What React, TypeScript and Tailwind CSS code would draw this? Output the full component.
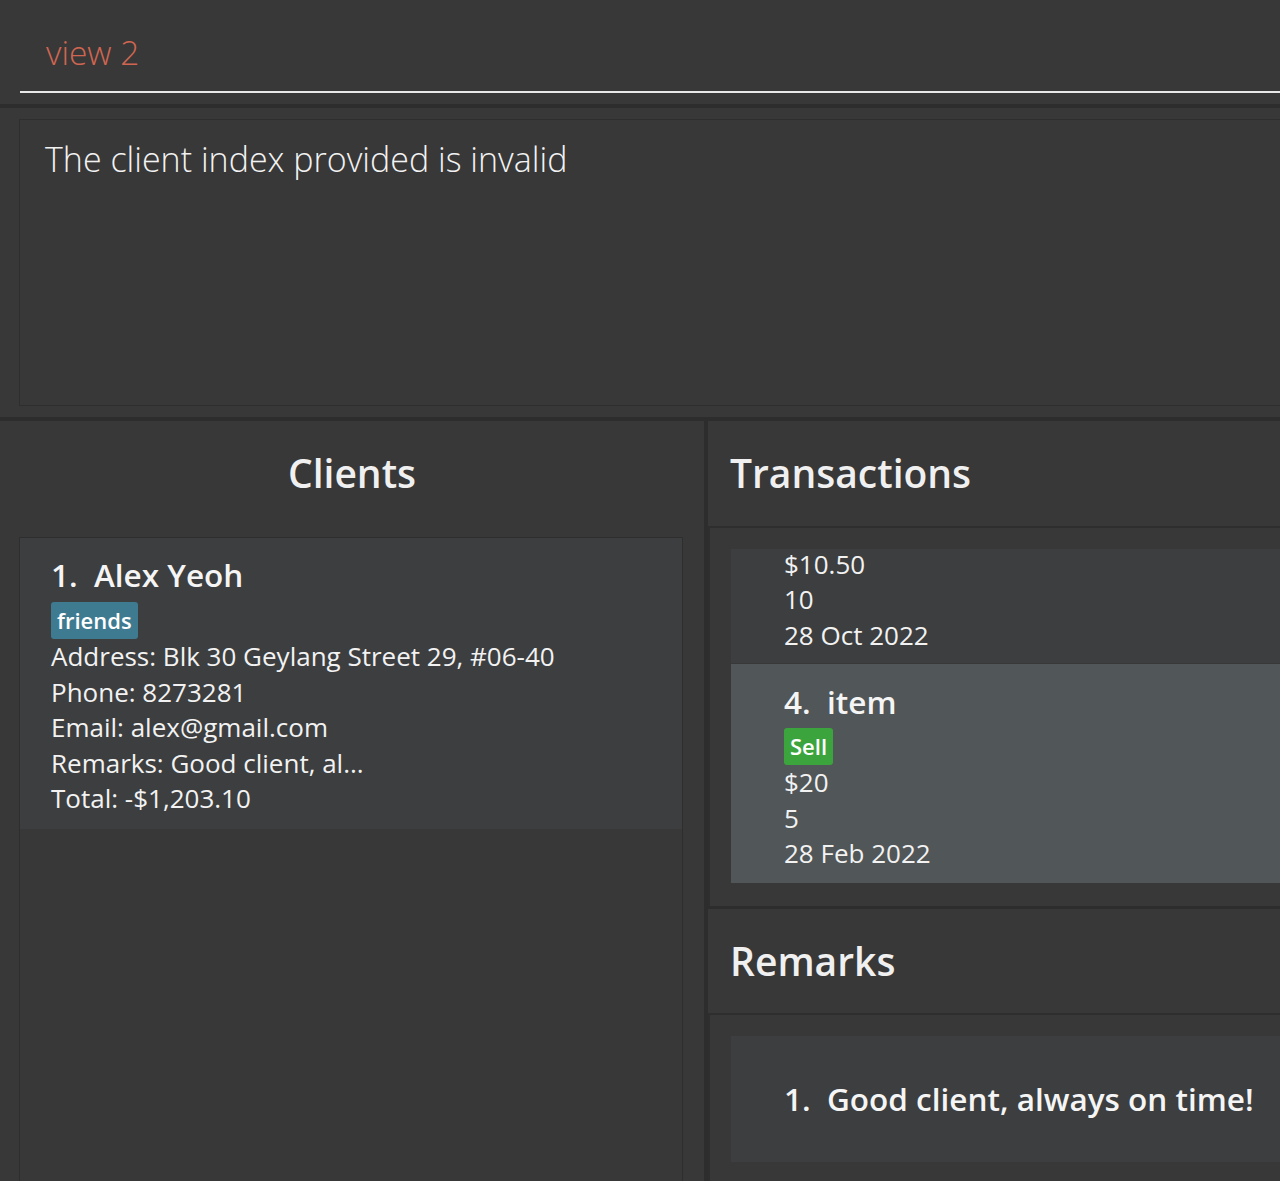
import React from 'react';

const font = "font-['Segoe_UI','Open_Sans',sans-serif]";

const Tag = ({ label, color }: { label: string; color: string }) => (
  <div className="flex">
    <span
      className={`h-[37px] px-[6px] rounded-[3px] text-[22px] leading-[37px] font-semibold text-white ${color}`}
    >
      {label}
    </span>
  </div>
);

const SmallLine = ({ children }: { children: React.ReactNode }) => (
  <div className="text-[26px] leading-[35.5px] text-[#f2f2f2] whitespace-nowrap">{children}</div>
);

const BigLine = ({ children }: { children: React.ReactNode }) => (
  <div className="text-[31.5px] leading-[40px] font-semibold text-[#f5f5f5] whitespace-nowrap">
    {children}
  </div>
);

const ClientsPanel = () => (
  <div className="w-[704px] flex flex-col shrink-0">
    <div className="h-[116px] pt-[22px] text-center text-[39px] leading-[60px] font-semibold text-[#f0f0f0]">
      Clients
    </div>
    <div className="flex-1 pl-[19px] pr-[21px]">
      <div className="h-full border border-b-0 border-[#2e2e2e]">
        <div className="bg-[#3c3e3f] pl-[31px] pt-[17px] pb-[12px]">
          <BigLine>1.&nbsp;&nbsp;Alex Yeoh</BigLine>
          <div className="mt-[7px]">
            <Tag label="friends" color="bg-[#3e7b91]" />
          </div>
          <SmallLine>Address: Blk 30 Geylang Street 29, #06-40</SmallLine>
          <SmallLine>Phone: 8273281</SmallLine>
          <SmallLine>Email: alex@gmail.com</SmallLine>
          <SmallLine>Remarks: Good client, al...</SmallLine>
          <SmallLine>Total: -$1,203.10</SmallLine>
        </div>
      </div>
    </div>
  </div>
);

const SectionHeader = ({ title, height }: { title: string; height: string }) => (
  <div className={`${height} pl-[22px] pt-[22px] border-b-2 border-[#2e2e2e]`}>
    <div className="text-[39px] leading-[60px] font-semibold text-[#f0f0f0] whitespace-nowrap">{title}</div>
  </div>
);

const TransactionsList = () => (
  <div className="h-[378px] border-l-2 border-[#2e2e2e] pl-[21px] pt-[21px] overflow-hidden">
    {/* partly scrolled-out cell */}
    <div className="h-[114px] bg-[#3c3e3f] pl-[53px] pb-[10px] flex flex-col justify-end">
      <SmallLine>$10.50</SmallLine>
      <SmallLine>10</SmallLine>
      <SmallLine>28 Oct 2022</SmallLine>
    </div>
    <div className="mt-px bg-[#515658] pl-[53px] pt-[18px] pb-[11px]">
      <BigLine>4.&nbsp;&nbsp;item</BigLine>
      <div className="mt-[6px]">
        <Tag label="Sell" color="bg-[#3ca43c]" />
      </div>
      <SmallLine>$20</SmallLine>
      <SmallLine>5</SmallLine>
      <SmallLine>28 Feb 2022</SmallLine>
    </div>
  </div>
);

const RemarksList = () => (
  <div className="flex-1 border-l-2 border-[#2e2e2e] pl-[21px] pt-[21px]">
    <div className="h-[126px] bg-[#3c3e3f] pl-[53px] flex items-center">
      <BigLine>1.&nbsp;&nbsp;Good client, always on time!</BigLine>
    </div>
  </div>
);

const RightPanel = () => (
  <div className="flex-1 min-w-0 flex flex-col">
    <SectionHeader title="Transactions" height="h-[107px]" />
    <TransactionsList />
    <div className="h-[3px] bg-[#2d2d2d]" />
    <SectionHeader title="Remarks" height="h-[106px]" />
    <RemarksList />
  </div>
);

export default function App() {
  return (
    <div className={`w-[1280px] h-[1181px] overflow-hidden bg-[#383838] flex flex-col ${font}`}>
      {/* command box */}
      <div className="h-[104px] pl-5 shrink-0">
        <div className="pt-[28px] pb-[15px] pl-[26px] border-b-2 border-[#e8e8e8] text-[33.5px] leading-[48px] font-light text-[#d06651]">
          view 2
        </div>
      </div>
      <div className="h-[4px] bg-[#2d2d2d] shrink-0" />

      {/* result display */}
      <div className="h-[309px] pl-[19px] py-[11px] shrink-0">
        <div className="h-full border border-r-0 border-[#2e2e2e] pl-[25px] pt-[15px] text-[34px] leading-[48px] font-light text-[#f2f2f2]">
          The client index provided is invalid
        </div>
      </div>
      <div className="h-[4px] bg-[#2d2d2d] shrink-0" />

      <div className="flex flex-1 min-h-0">
        <ClientsPanel />
        <div className="w-[4px] bg-[#2d2d2d] shrink-0" />
        <RightPanel />
      </div>
    </div>
  );
}
